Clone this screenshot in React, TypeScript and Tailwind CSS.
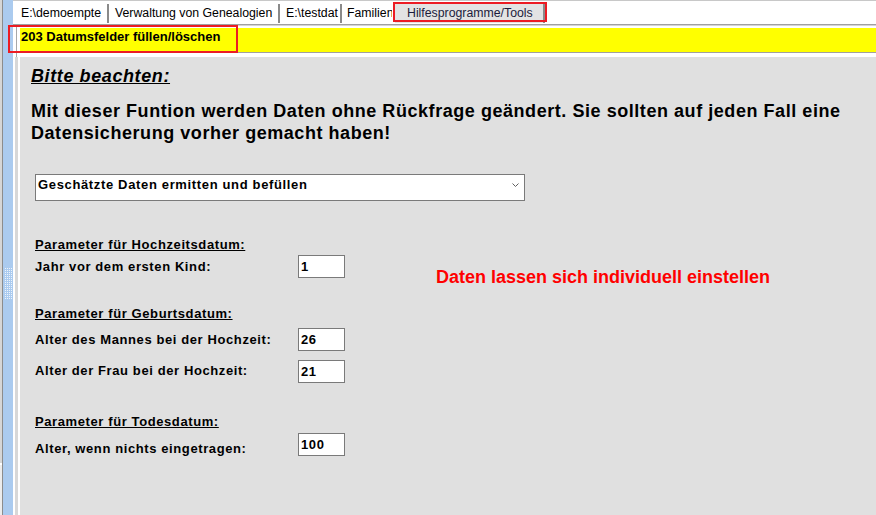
import React from "react";

const Grip = () => {
  const dots: React.ReactNode[] = [];
  for (let j = 0; j < 16; j++) {
    for (let i = 0; i < 4; i++) {
      dots.push(<rect key={`${i}-${j}`} x={i * 2} y={j * 2} width={1} height={1} fill="#eef4fc" />);
    }
  }
  return (
    <svg width="8" height="32" viewBox="0 0 8 32">
      {dots}
    </svg>
  );
};

const Label = ({ children, u = false, className = "" }: { children: React.ReactNode; u?: boolean; className?: string }) => (
  <div className={`h-[16px] text-[13px] leading-[16px] font-bold tracking-[0.6px] whitespace-nowrap ${u ? "underline" : ""} ${className}`}>
    {children}
  </div>
);

const Box = ({ v, className = "" }: { v: string; className?: string }) => (
  <div className={`w-[47px] h-[23px] shrink-0 border border-[#7a7a7a] bg-white pl-[2px] pt-[3px] text-[13px] font-bold leading-[15px] tracking-[0.6px] ${className}`}>
    {v}
  </div>
);

export default function App() {
  return (
    <div className="relative w-[876px] h-[515px] overflow-hidden bg-white flex font-['Liberation_Sans',Arial,sans-serif] text-black">
      {/* left strip */}
      <div className="w-[13px] h-full flex shrink-0">
        <div className="w-[2px] h-full flex flex-col">
          <div className="h-[463px] bg-[#d6d6d6]" />
          <div className="h-[2px] bg-white" />
          <div className="flex-1 bg-[#ececec]" />
        </div>
        <div className="w-[1px] h-full bg-[#8c8c8c]" />
        <div className="w-[10px] h-full bg-[#abcbef] pt-[268px] pl-[2px]">
          <Grip />
        </div>
      </div>

      {/* main column */}
      <div className="flex-1 flex flex-col min-w-0">
        {/* tab bar */}
        <div className="h-[24px] border-t border-[#c8c8c8] pt-[3px] pl-[4px] flex items-start">
          <div className="flex h-[19px] text-[12.3px] leading-[19px] whitespace-nowrap">
            <div className="w-[92px] pl-[4px] border-r-2 border-[#8a8a8a]">E:\demoempte</div>
            <div className="w-[171px] pl-[6px] border-r-2 border-[#8a8a8a]">Verwaltung von Genealogien</div>
            <div className="w-[62px] pl-[6px] border-r-2 border-[#8a8a8a]">E:\testdat</div>
            <div className="w-[50px] pl-[5px] overflow-hidden">Familien</div>
            <div className="w-[3px]" />
            <div className="relative w-[150px] pl-[12px] bg-[#e3e3e3] border-r-2 border-[#8a8a8a] text-[#1c1c3c]">
              Hilfesprogramme/Tools
              <div className="absolute -left-[2px] -top-[2px] w-[154px] h-[20px] border-2 border-[#ec1c24]" />
            </div>
          </div>
        </div>
        <div className="h-[1px] bg-[#a0a0a0]" />
        <div className="h-[1px] bg-[#d4d4d4]" />

        {/* body */}
        <div className="flex-1 flex min-h-0">
          {/* gutter */}
          <div className="w-[7px] flex flex-col shrink-0">
            <div className="h-[31px] flex">
              <div className="w-[3px]" />
              <div className="w-[1px] bg-[#a8a8a8]" />
            </div>
            <div className="flex-1 flex">
              <div className="w-[2px]" />
              <div className="w-[3px] bg-[#d8d8d8]" />
            </div>
          </div>

          <div className="flex-1 flex flex-col min-w-0">
            <div className="h-[2px]" />
            <div className="h-[24px] bg-[#ffff00] pl-[1px] pt-[1px] text-[13px] font-bold leading-[15px] whitespace-nowrap">
              203 Datumsfelder füllen/löschen
            </div>
            <div className="h-[1px] bg-[#a0a0a0]" />
            <div className="h-[4px]" />

            {/* panel */}
            <div className="flex-1 bg-[#e0e0e0] pt-[8px] pl-[11px]">
              <div className="h-[22px] text-[18px] leading-[22px] font-bold italic underline tracking-[0.6px] whitespace-nowrap">
                Bitte beachten:
              </div>
              <div className="mt-[14px] text-[18px] leading-[21.5px] font-bold tracking-[0.55px] whitespace-nowrap">
                Mit dieser Funtion werden Daten ohne Rückfrage geändert. Sie sollten auf jeden Fall eine
                <br />
                Datensicherung vorher gemacht haben!
              </div>

              <div className="mt-[30px] ml-[4px] w-[490px] h-[27px] border border-[#7a7a7a] bg-white flex justify-between items-start">
                <div className="pl-[2px] pt-[2px] text-[13px] leading-[15px] font-bold tracking-[0.65px] whitespace-nowrap">
                  Geschätzte Daten ermitten und befüllen
                </div>
                <svg className="mt-[8px] mr-[5px]" width="7" height="4" viewBox="0 0 7 4">
                  <polyline points="0.5,0.5 3.5,3.5 6.5,0.5" fill="none" stroke="#606060" strokeWidth="1" />
                </svg>
              </div>

              <div className="mt-[36px] flex items-start">
                <div className="ml-[4px] w-[310px] flex flex-col">
                  <Label u>Parameter für Hochzeitsdatum:</Label>
                  <div className="mt-[2px] flex items-start">
                    <Label className="w-[263px] mt-[4px]">Jahr vor dem ersten Kind:</Label>
                    <Box v="1" />
                  </div>

                  <Label u className="mt-[28px]">Parameter für Geburtsdatum:</Label>
                  <div className="mt-[6px] flex items-start">
                    <Label className="w-[263px] mt-[4px]">Alter des Mannes bei der Hochzeit:</Label>
                    <Box v="26" />
                  </div>
                  <div className="mt-[9px] flex items-start">
                    <Label className="w-[263px] mt-[3px]">Alter der Frau bei der Hochzeit:</Label>
                    <Box v="21" />
                  </div>

                  <Label u className="mt-[31px]">Parameter für Todesdatum:</Label>
                  <div className="mt-[3px] flex items-start">
                    <Label className="w-[263px] mt-[8px]">Alter, wenn nichts eingetragen:</Label>
                    <Box v="100" />
                  </div>
                </div>
                <div className="ml-[91px] mt-[30px] text-[18px] leading-[21px] font-bold text-[#ff0000] whitespace-nowrap">
                  Daten lassen sich individuell einstellen
                </div>
              </div>
            </div>
          </div>
        </div>
      </div>

      {/* annotation box around title */}
      <div className="absolute left-[8px] top-[25px] w-[230px] h-[28px] border-2 border-[#ec1c24]" />
    </div>
  );
}
